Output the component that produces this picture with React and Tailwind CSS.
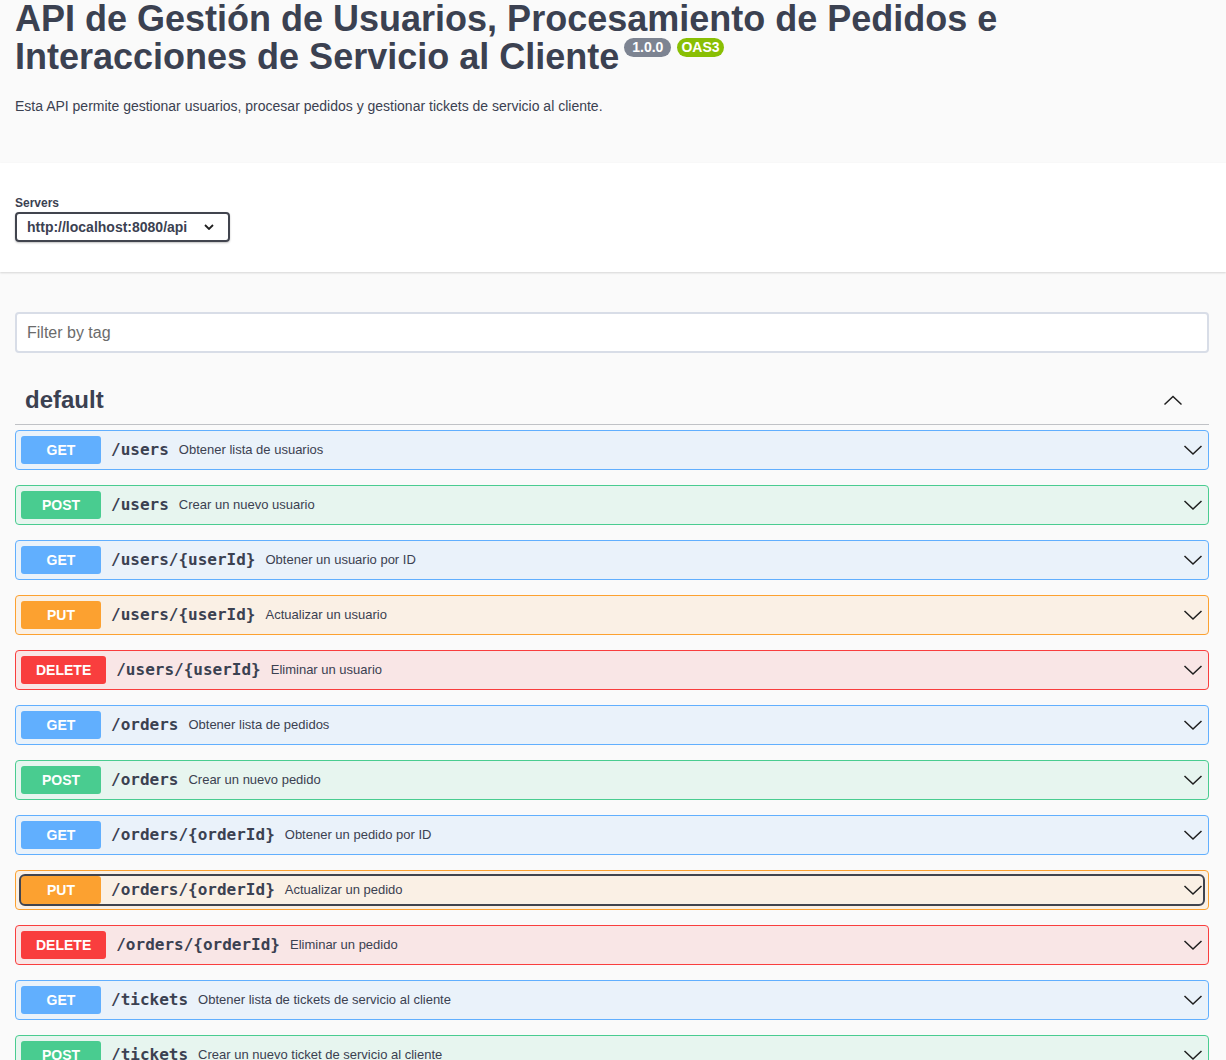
const ops = [
  { method: "GET", path: "/users", desc: "Obtener lista de usuarios" },
  { method: "POST", path: "/users", desc: "Crear un nuevo usuario" },
  { method: "GET", path: "/users/{userId}", desc: "Obtener un usuario por ID" },
  { method: "PUT", path: "/users/{userId}", desc: "Actualizar un usuario" },
  { method: "DELETE", path: "/users/{userId}", desc: "Eliminar un usuario" },
  { method: "GET", path: "/orders", desc: "Obtener lista de pedidos" },
  { method: "POST", path: "/orders", desc: "Crear un nuevo pedido" },
  { method: "GET", path: "/orders/{orderId}", desc: "Obtener un pedido por ID" },
  { method: "PUT", path: "/orders/{orderId}", desc: "Actualizar un pedido", focused: true },
  { method: "DELETE", path: "/orders/{orderId}", desc: "Eliminar un pedido" },
  { method: "GET", path: "/tickets", desc: "Obtener lista de tickets de servicio al cliente" },
  { method: "POST", path: "/tickets", desc: "Crear un nuevo ticket de servicio al cliente" },
];

const styles = {
  GET: { box: "border-[#61affe] bg-[#61affe]/10", badge: "bg-[#61affe]" },
  POST: { box: "border-[#49cc90] bg-[#49cc90]/10", badge: "bg-[#49cc90]" },
  PUT: { box: "border-[#fca130] bg-[#fca130]/10", badge: "bg-[#fca130]" },
  DELETE: { box: "border-[#f93e3e] bg-[#f93e3e]/10", badge: "bg-[#f93e3e]" },
};

const Chevron = ({ up }) => (
  <svg width="20" height="20" viewBox="0 0 20 20" className="shrink-0">
    <polyline
      points={up ? "1.5,14.5 10,6.5 18.5,14.5" : "1.5,6 10,14 18.5,6"}
      fill="none"
      stroke="#1f1f1f"
      strokeWidth="1.5"
    />
  </svg>
);

const OpRow = ({ op }) => {
  const s = styles[op.method];
  return (
    <div className={`mb-[15px] rounded-[4px] border ${s.box}`}>
      <div className="p-[5px]">
        <div
          className={`flex h-[28px] items-center rounded-[4px] ${
            op.focused ? "outline-2 outline-[#41444e]" : ""
          }`}
        >
          <span
            className={`flex h-[28px] min-w-[80px] items-center justify-center rounded-[3px] px-[15px] text-[14px] font-bold text-white ${s.badge}`}
          >
            {op.method}
          </span>
          <span className="pl-[10px] pr-[10px] font-['DejaVu_Sans_Mono',monospace] text-[16px] font-bold text-[#3b4151]">
            {op.path}
          </span>
          <span className="text-[13px] text-[#3b4151]">{op.desc}</span>
          <div className="flex-1" />
          <Chevron />
        </div>
      </div>
    </div>
  );
};

export default function App() {
  return (
    <div className="min-h-screen bg-[#fafafa] font-['Liberation_Sans',Arial,sans-serif] text-[#3b4151]">
      {/* info */}
      <div className="h-[163px] pl-[15px] pr-[17px]">
        <h2 className="text-[36px] font-bold leading-[38px]">
          API de Gestión de Usuarios, Procesamiento de Pedidos e Interacciones de Servicio al Cliente
          <span className="relative top-[-12px] ml-[5px] inline-block rounded-full bg-[#7d8492] px-[8px] py-[2px] align-middle text-[14px] leading-[15px] text-white">
            1.0.0
          </span>
          <span className="relative top-[-12px] ml-[6px] inline-block rounded-full bg-[#89bf04] px-[4px] py-[2px] align-middle text-[14px] leading-[15px] text-white">
            OAS3
          </span>
        </h2>
        <p className="mt-[20px] text-[14px]">
          Esta API permite gestionar usuarios, procesar pedidos y gestionar tickets de servicio al cliente.
        </p>
      </div>

      {/* servers */}
      <div className="h-[109px] bg-white pl-[15px] pr-[17px] pt-[33px] shadow-[0_1px_2px_0_rgba(0,0,0,0.15)]">
        <div className="text-[12px] font-bold leading-[14px]">Servers</div>
        <div className="mt-[2px] flex h-[30px] w-[215px] items-center justify-between rounded-[4px] border-2 border-[#41444e] pl-[10px] pr-[14px] text-[14px] font-bold shadow-[0_1px_2px_0_rgba(0,0,0,0.25)]">
          <span>http://localhost:8080/api</span>
          <svg width="10" height="6" viewBox="0 0 10 6">
            <polyline points="1,1 5,5 9,1" fill="none" stroke="#1f1f1f" strokeWidth="1.8" />
          </svg>
        </div>
      </div>

      {/* operations */}
      <div className="pl-[15px] pr-[17px] pb-10">
        <div className="pt-[40px]">
          <div className="flex h-[41px] items-center rounded-[4px] border-2 border-[#d8dde7] bg-white px-[10px] text-[16px] text-[#6b6b6b]">
            Filter by tag
          </div>
        </div>

        <div className="mt-[23px] mb-[5px] flex h-[49px] items-center border-b border-[#3b4151]/30 pl-[10px] pr-[26px]">
          <h3 className="flex-1 text-[24px] font-bold">default</h3>
          <Chevron up />
        </div>

        {ops.map((op, i) => (
          <OpRow key={i} op={op} />
        ))}
      </div>
    </div>
  );
}
